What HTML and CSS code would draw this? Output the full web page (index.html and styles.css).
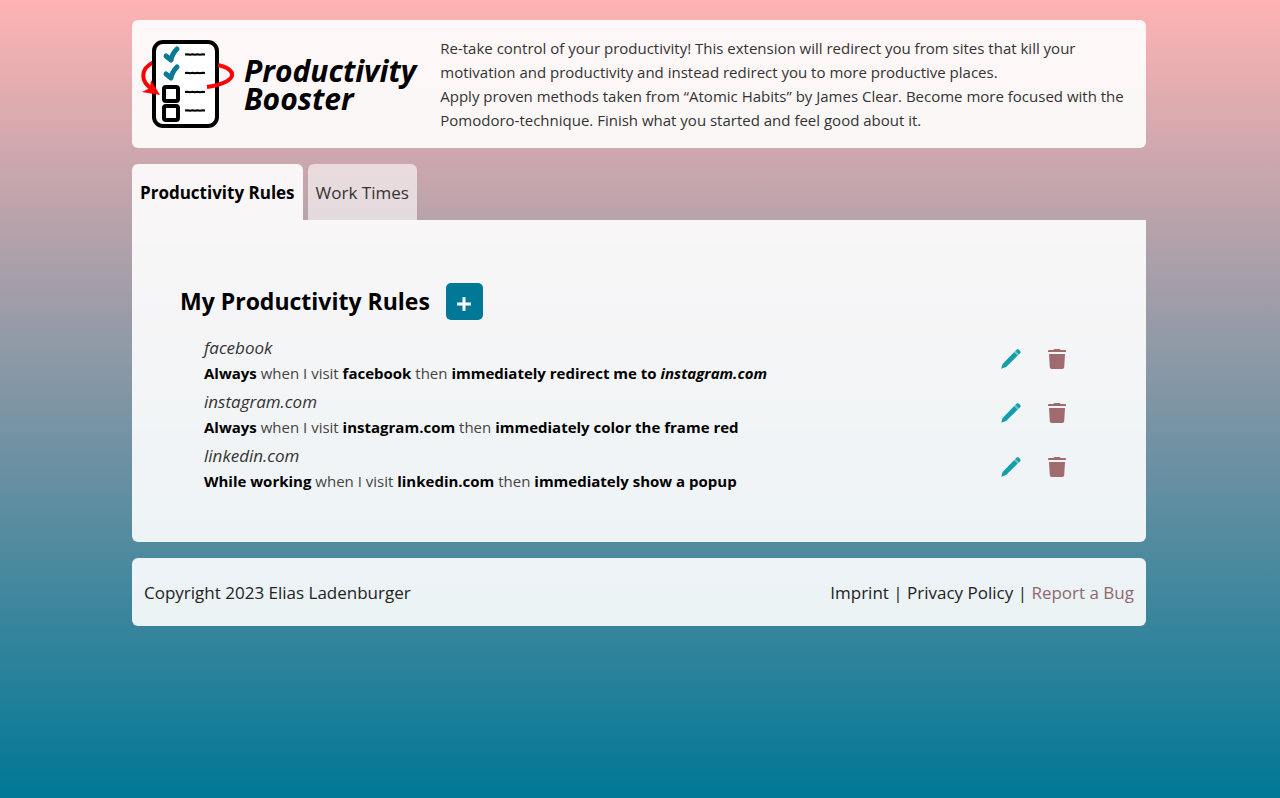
FILE: index.html
```html
<!DOCTYPE html>
<html lang="en">
<head>
<meta charset="utf-8">
<title>Productivity Booster</title>
<link rel="stylesheet" href="styles.css">
</head>
<body>
<svg class="sprite" aria-hidden="true">
  <symbol id="pencil" viewBox="0 0 22 22"><path fill="#129fab" d="M1.200 20.800 2.600 16 14.200 4l3.600 3.600L6.100 19z"/><path fill="#67bec6" d="m14.200 4 1.200-1.200L19 6.400l-1.200 1.200z"/><path fill="#129fab" d="m15.400 2.800 1.400-1.300q.9-.8 1.800 0l1.700 1.700q.8.8 0 1.700L19 6.400z"/></symbol>
  <symbol id="trash" viewBox="0 0 22 22"><path fill="#a06b6f" d="M2 4V2.800q0-.8 1-.8h4.200L8.500.9h5L14.800 2H19q1 0 1 .8V4zM3 6h16l-.8 13.200q-.1 1.800-1.800 1.800H5.600q-1.700 0-1.800-1.800z"/></symbol>
</svg>
<div class="page">
  <header class="panel header">
    <div class="brand">
      <svg class="logo" viewBox="0 0 96 92" aria-hidden="true">
        <path d="M14 24C-1 31 1 44 12 51" fill="none" stroke="#f00" stroke-width="4"/>
        <rect x="14" y="4" width="63" height="84" rx="9" fill="#fff" stroke="#000" stroke-width="4"/>
        <path d="M78 27c19 4 22 17-11 22" fill="none" stroke="#f00" stroke-width="4"/>
        <path d="m2 54 18 3L11 42l-1 8z" fill="#f00"/>
        <g fill="none" stroke="#077a95" stroke-width="5" stroke-linecap="round" stroke-linejoin="round"><path d="m26 18 5 4q1-6 6-11"/><path d="m26 36 5 4q1-6 6-11"/></g>
        <g fill="none" stroke="#000" stroke-width="4"><rect x="24" y="49" width="14" height="14" rx="2"/><rect x="24" y="68" width="14" height="14" rx="2"/></g>
        <g fill="none" stroke="#000" stroke-width="2"><path id="note" d="m45 16.500 2.500-.3 2.500.6 2.500-.6 2.500.6 2.500-.6 2.500.6 2.500-.6 2.500.3"/><use href="#note" y="18.500"/><use href="#note" y="37.500"/><use href="#note" y="56"/></g>
      </svg>
      <h1 class="name">Productivity<br>Booster</h1>
    </div>
    <div class="intro">
      <p>Re-take control of your productivity! This extension will redirect you from sites that kill your motivation and productivity and instead redirect you to more productive places.</p>
      <p>Apply proven methods taken from “Atomic Habits” by James Clear. Become more focused with the Pomodoro-technique. Finish what you started and feel good about it.</p>
    </div>
  </header>
  <nav class="tabs" role="tablist">
    <button class="tab active" role="tab" aria-selected="true">Productivity Rules</button>
    <button class="tab" role="tab" aria-selected="false">Work Times</button>
  </nav>
  <main class="panel rules">
    <div class="heading"><h2>My Productivity Rules</h2><button class="add" aria-label="Add rule"><svg viewBox="0 0 16 16"><path d="M8 1v14M1 8h14" stroke="#fff" stroke-width="3"/></svg></button></div>
    <ul class="list">
      <li class="rule"><div class="text"><i class="site">facebook</i><p><b>Always</b> when I visit <b>facebook</b> then <b>immediately redirect me to <i>instagram.com</i></b></p></div>
        <div class="actions"><button aria-label="Edit facebook"><svg><use href="#pencil"/></svg></button><button aria-label="Delete facebook"><svg><use href="#trash"/></svg></button></div></li>
      <li class="rule"><div class="text"><i class="site">instagram.com</i><p><b>Always</b> when I visit <b>instagram.com</b> then <b>immediately color the frame red</b></p></div>
        <div class="actions"><button aria-label="Edit instagram.com"><svg><use href="#pencil"/></svg></button><button aria-label="Delete instagram.com"><svg><use href="#trash"/></svg></button></div></li>
      <li class="rule"><div class="text"><i class="site">linkedin.com</i><p><b>While working</b> when I visit <b>linkedin.com</b> then <b>immediately show a popup</b></p></div>
        <div class="actions"><button aria-label="Edit linkedin.com"><svg><use href="#pencil"/></svg></button><button aria-label="Delete linkedin.com"><svg><use href="#trash"/></svg></button></div></li>
    </ul>
  </main>
  <footer class="panel footer">
    <span>Copyright 2023 Elias Ladenburger</span>
    <span><a href="#imprint">Imprint</a> | <a href="#privacy">Privacy Policy</a> | <a class="bug" href="#bug">Report a Bug</a></span>
  </footer>
</div>
</body>
</html>
```
FILE: styles.css
```css
* { box-sizing: border-box; margin: 0; padding: 0; }
body {
  min-height: 100vh;
  background: linear-gradient(#ffb3b3, #007896);
  color: #222;
  font: 17px/24px "Open Sans", sans-serif;
}
button { border: 0; background: none; font: inherit; color: inherit; cursor: pointer; }
.sprite { position: absolute; width: 0; height: 0; }
.page { padding: 20px 134px 20px 132px; }
.panel { background: rgba(255, 255, 255, .9); border-radius: 6px; }
.header { display: flex; align-items: center; gap: 24px; min-height: 128px; padding: 16px 8px; }
.brand { display: flex; align-items: center; gap: 8px; flex: none; }
.logo { width: 96px; height: 92px; }
.name { padding-top: 2px; font: italic 700 30px/28px "Open Sans", sans-serif; color: #000; }
.intro { flex: 1; font-size: 15px; color: #333; }
.tabs { display: flex; gap: 5px; margin-top: 16px; }
.tab { height: 56px; padding: 2px 8px 0; border-radius: 6px 6px 0 0; background: rgba(255, 255, 255, .6); font-size: 17px; color: #333; }
.active { background: rgba(255, 255, 255, .9); font-weight: 700; color: #000; }
.rules { padding: 62px 48px 44px; border-radius: 0 0 6px 6px; }
.heading { display: flex; align-items: center; gap: 16px; color: #000; }
.heading h2 { font-size: 23px; line-height: 38px; }
.add { display: grid; place-items: center; width: 37px; height: 37px; border-radius: 5px; background: #007896; }
.add svg { width: 16px; height: 16px; margin-top: 6px; }
.list { list-style: none; margin-top: 16px; padding: 0 24px; }
.rule { display: flex; justify-content: space-between; height: 54px; }
.site { display: block; color: #333; }
.text p { font-size: 15px; line-height: 26px; color: #444; }
.text b { color: #000; }
.actions { display: flex; gap: 24px; padding: 12px 6px 0 0; }
.actions button, .actions svg { display: block; width: 22px; height: 22px; }
.footer { display: flex; align-items: center; justify-content: space-between; min-height: 68px; margin-top: 16px; padding: 2px 12px 0; }
.footer a { color: inherit; text-decoration: none; }
.footer .bug { color: #8f686d; }
```
